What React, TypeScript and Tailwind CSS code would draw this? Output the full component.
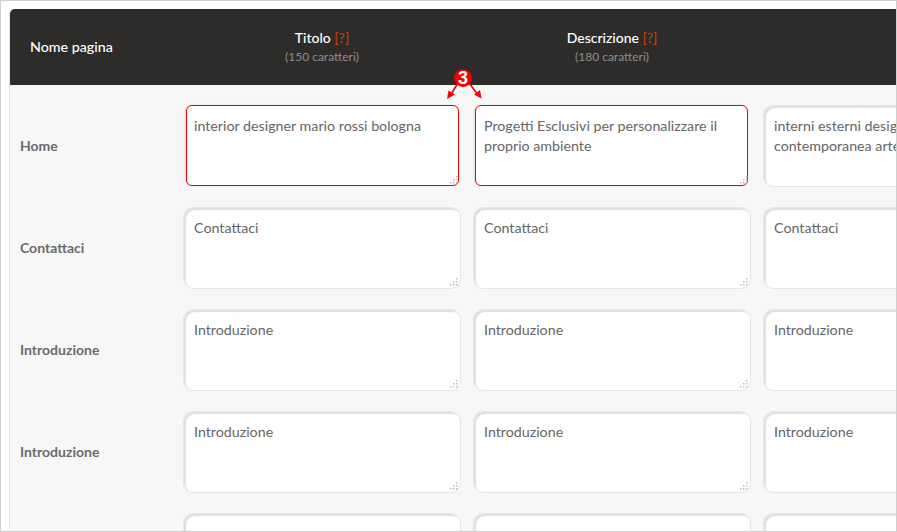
const cols = [
  { title: 'Titolo', limit: '(150 caratteri)' },
  { title: 'Descrizione', limit: '(180 caratteri)' },
]

const rows = [
  {
    name: 'Home',
    values: [
      'interior designer mario rossi bologna',
      'Progetti Esclusivi per personalizzare il proprio ambiente',
      'interni esterni design architettura contemporanea arte moderna',
    ],
    marked: true,
  },
  { name: 'Contattaci', values: ['Contattaci', 'Contattaci', 'Contattaci'] },
  { name: 'Introduzione', values: ['Introduzione', 'Introduzione', 'Introduzione'] },
  { name: 'Introduzione', values: ['Introduzione', 'Introduzione', 'Introduzione'] },
  { name: '', values: ['', '', ''] },
]

function Callout() {
  return (
    <div className="absolute left-[445px] top-[68px] w-[38px] h-[32px]">
      <svg width="38" height="32" viewBox="0 0 38 32" className="absolute left-0 top-0">
        <path d="M12 14 L4 27" stroke="#f00000" strokeWidth="1.6" fill="none" />
        <path d="M23 14 L33 27" stroke="#f00000" strokeWidth="1.6" fill="none" />
        <path d="M1 30 L2.5 21.5 L9 25.5 Z" fill="#f00000" />
        <path d="M35.5 29.5 L34 21 L28 25.5 Z" fill="#f00000" />
        <circle cx="17" cy="9" r="9" fill="#f00000" />
      </svg>
      <span className="absolute left-[8px] top-0 w-[18px] text-center text-[18px] leading-[18px] font-bold text-white font-['Liberation_Sans',sans-serif]">
        3
      </span>
    </div>
  )
}

function Grip() {
  return (
    <svg width="9" height="8" viewBox="0 0 9 8" className="absolute right-[3px] bottom-[3px]">
      <rect x="7" y="0" width="1.5" height="1.5" fill="#bdbdbd" />
      <rect x="4" y="3" width="1.5" height="1.5" fill="#bdbdbd" />
      <rect x="7" y="3" width="1.5" height="1.5" fill="#bdbdbd" />
      <rect x="1" y="6" width="1.5" height="1.5" fill="#bdbdbd" />
      <rect x="4" y="6" width="1.5" height="1.5" fill="#bdbdbd" />
      <rect x="7" y="6" width="1.5" height="1.5" fill="#bdbdbd" />
    </svg>
  )
}

const markedBase =
  'block w-[273px] h-[81px] rounded-[6px] border border-[#f00000] bg-white pt-[10px] pr-[8px] text-[14.25px] leading-[20px] text-[#666666] outline-none resize-none overflow-hidden shadow-[-1px_0_2px_#dddddd]'
const plainBase =
  'block w-[278px] h-[82px] rounded-[10px] border border-[#e6e6e6] bg-white pl-[10px] pt-[10px] pr-[8px] text-[14.25px] leading-[20px] text-[#666666] outline-none resize-none overflow-hidden shadow-[inset_2px_2px_1px_#e0e0e0]'

export default function App() {
  return (
    <div className="relative w-[897px] h-[532px] overflow-hidden bg-white border border-[#cfcfcf] pl-[8px] pt-[8px] font-['Lato','Open_Sans',sans-serif]">
      <div className="w-[900px] h-[530px] bg-[#f7f7f7] border-l border-[#e4e4e4] rounded-t-[5px]">
        <div className="flex h-[76px] items-center pb-[2px] bg-[#2e2c2b] rounded-t-[5px] text-white">
          <div className="w-[173px] pl-[20px] mt-[2px] text-[14.25px] leading-[20px] font-medium">Nome pagina</div>
          {cols.map(c => (
            <div key={c.title} className="w-[278px] mr-[12px] text-center">
              <div className="text-[14px] leading-[20px] font-medium">
                {c.title} <span className="font-normal text-[#c8410f]">[?]</span>
              </div>
              <div className="text-[12px] leading-[16px] mt-[1px] text-[#8d8d8d]">{c.limit}</div>
            </div>
          ))}
        </div>
        <div className="pt-[20px] flex flex-col gap-[20px]">
          {rows.map((r, i) => (
            <div key={i} className="flex items-center h-[82px]">
              <div className="w-[173px] shrink-0 pl-[10px] pb-[2px] text-[14px] font-bold text-[#6b6b6b]">{r.name}</div>
              <div className="flex gap-[12px]">
                {r.values.map((v, j) => (
                  <div key={j} className="relative w-[278px] h-[82px] shrink-0">
                    {r.marked && j === 0 && <textarea readOnly defaultValue={v} className={`${markedBase} ml-[3px] pl-[7px]`} />}
                    {r.marked && j === 1 && <textarea readOnly defaultValue={v} className={`${markedBase} ml-[2px] pl-[8px]`} />}
                    {(!r.marked || j > 1) && <textarea readOnly defaultValue={v} className={plainBase} />}
                    <Grip />
                  </div>
                ))}
              </div>
            </div>
          ))}
        </div>
      </div>
      <Callout />
    </div>
  )
}
